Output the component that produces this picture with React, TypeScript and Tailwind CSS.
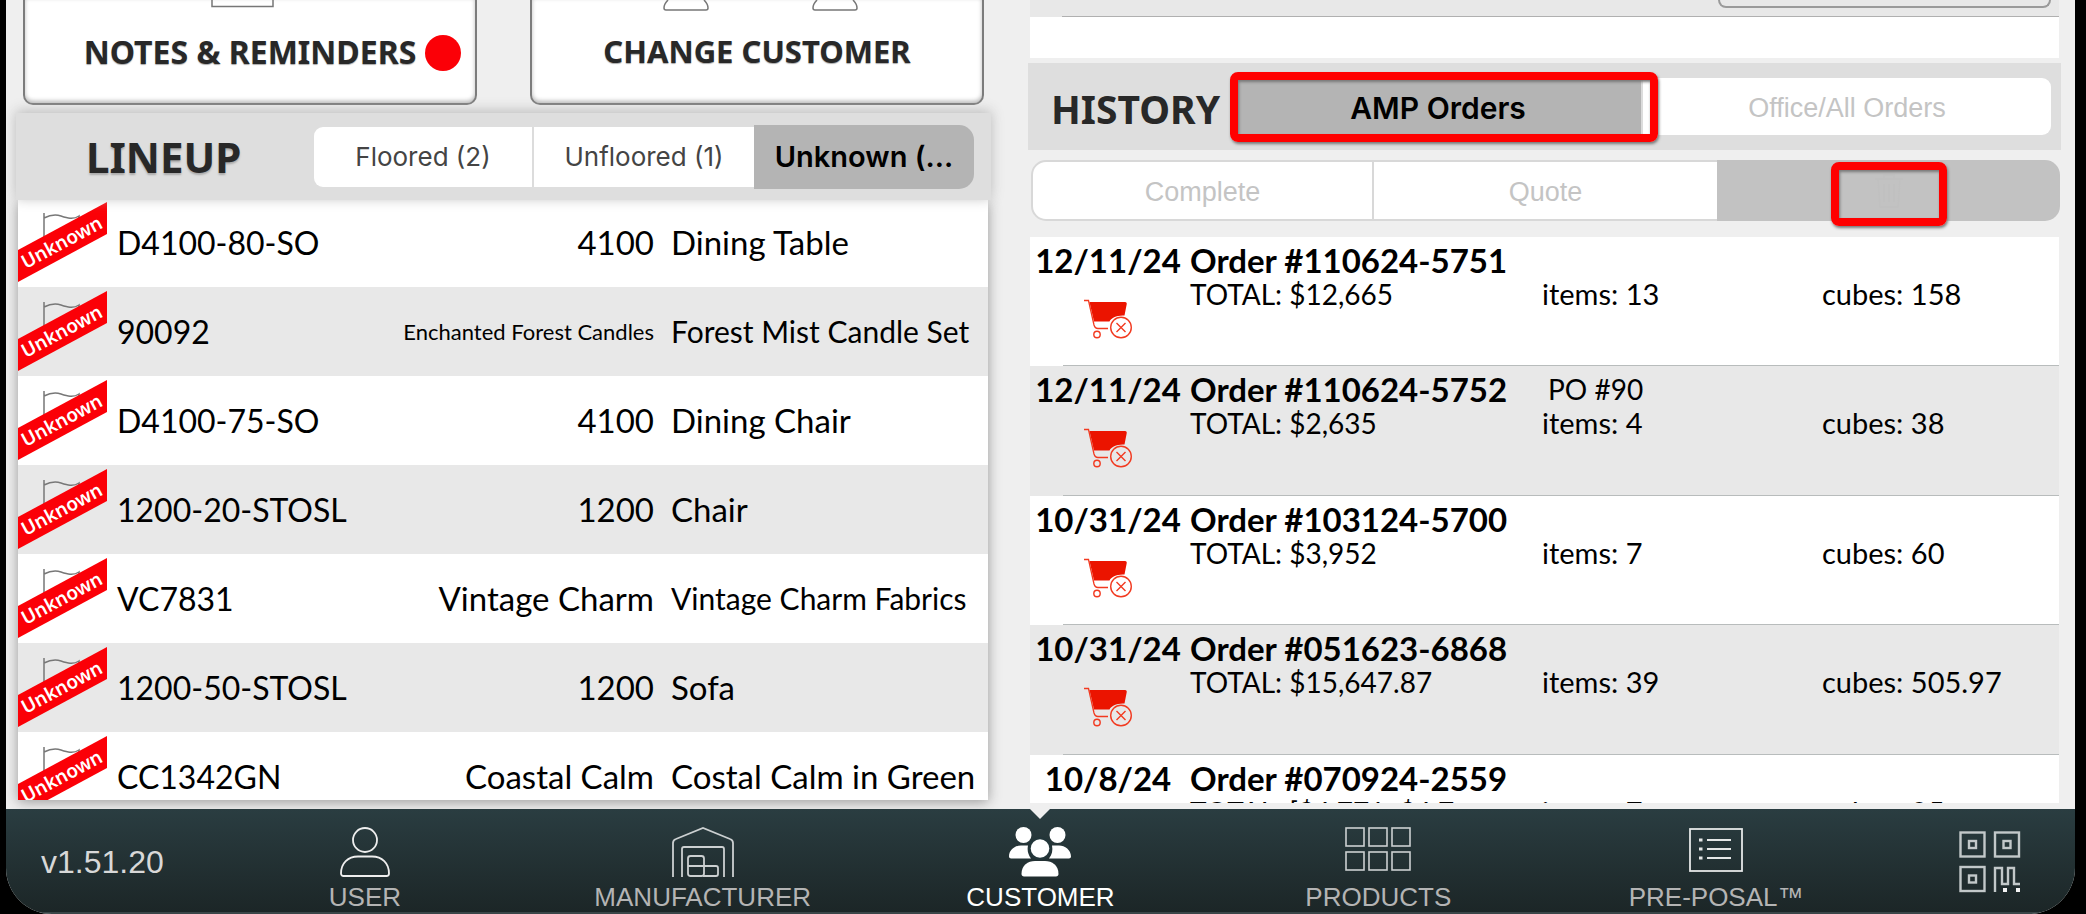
import type { ReactNode } from 'react'
import clsx from 'clsx'

type LineupItem = {
  code: string
  group: string
  name: string
  groupClass?: string
  nameClass?: string
}

type Order = {
  date: string
  number: string
  total: string
  po?: string
  items: string
  cubes: string
}

const LINEUP: LineupItem[] = [
  { code: 'D4100-80-SO', group: '4100', name: 'Dining Table' },
  {
    code: '90092',
    group: 'Enchanted Forest Candles',
    name: 'Forest Mist Candle Set',
    groupClass: 'text-[22px]',
    nameClass: 'text-[30px]',
  },
  { code: 'D4100-75-SO', group: '4100', name: 'Dining Chair' },
  { code: '1200-20-STOSL', group: '1200', name: 'Chair' },
  {
    code: 'VC7831',
    group: 'Vintage Charm',
    name: 'Vintage Charm Fabrics',
    nameClass: 'text-[30px]',
  },
  { code: '1200-50-STOSL', group: '1200', name: 'Sofa' },
  { code: 'CC1342GN', group: 'Coastal Calm', name: 'Costal Calm in Green' },
]

const ORDERS: Order[] = [
  { date: '12/11/24', number: '110624-5751', total: '$12,665', items: '13', cubes: '158' },
  { date: '12/11/24', number: '110624-5752', total: '$2,635', po: 'PO #90', items: '4', cubes: '38' },
  { date: '10/31/24', number: '103124-5700', total: '$3,952', items: '7', cubes: '60' },
  { date: '10/31/24', number: '051623-6868', total: '$15,647.87', items: '39', cubes: '505.97' },
  { date: '10/8/24', number: '070924-2559', total: '[$4,771, $4.7', items: '7', cubes: '85' },
]

function FlagRibbon() {
  return (
    <svg width="89" height="89" viewBox="0 0 89 89" className="block">
      <path
        d="M26 15V50M26 20c6-3 11-4 17-2 6 2 12 4 18 0v10"
        fill="none"
        stroke="#777"
        strokeWidth="1.5"
      />
      <polygon points="0,52 89,4 89,36 0,84" fill="#fb0007" />
      <text
        x="44"
        y="51"
        textAnchor="middle"
        transform="rotate(-28.3 44 45)"
        fill="#fff"
        className="font-['Noto_Sans',sans-serif] text-[19px] font-semibold"
      >
        Unknown
      </text>
    </svg>
  )
}

function CartIcon() {
  return (
    <svg width="48" height="40" viewBox="0 0 48 40" fill="none" className="mx-auto mt-[22px] block">
      <path d="M0 1.5h4.5L10 26c.6 2.2 1.5 3.5 4 3.5h10" stroke="#f23a20" strokeWidth="1.3" />
      <path d="M5.5 3H41c1.5 0 2 1 1.7 2.3L40.5 16.5C33 16 27 19 25.5 22.500H10z" fill="#eb1400" />
      <circle cx="13" cy="35.5" r="3.2" stroke="#f23a20" strokeWidth="1.4" />
      <circle cx="37" cy="28.5" r="10.3" stroke="#f23a20" strokeWidth="1.4" />
      <path d="M32.5 24l9 9M41.5 24l-9 9" stroke="#f23a20" strokeWidth="1.4" />
    </svg>
  )
}

function TrashIcon() {
  return (
    <svg width="30" height="36" viewBox="0 0 30 36" fill="none" stroke="#c0c0c0" strokeWidth="1.5" className="mx-auto">
      <path d="M1 6h28M10 6V2h10v4M4 6l2 28h18l2-28M10 11v18M15 11v18M20 11v18" />
    </svg>
  )
}

function UserIcon() {
  return (
    <svg width="50" height="50" viewBox="0 0 50 50" fill="none" stroke="#eee" strokeWidth="1.8">
      <circle cx="25" cy="13" r="12" />
      <path d="M1 46.5C1 36 8 29.5 18 29.5h14c10 0 17 6.5 17 17 0 1.5-1 2.5-2.5 2.5h-43C2 49 1 48 1 46.5z" />
    </svg>
  )
}

function WarehouseIcon() {
  return (
    <svg width="62" height="50" viewBox="0 0 62 50" fill="none" stroke="#ccd0d1" strokeWidth="1.8">
      <path d="M1 50V16q0-3 3-4L31 1l27 11q3 1 3 4v34" />
      <path d="M10 50V22q0-2 2-2h38q2 0 2 2v28" />
      <rect x="16" y="29" width="16" height="20" rx="2.5" />
      <path d="M16 39h28q2 0 2 2v6q0 2-2 2H31" />
    </svg>
  )
}

function CustomersIcon() {
  return (
    <svg width="62" height="50" viewBox="0 0 62 50" fill="#fff">
      <circle cx="14.5" cy="8" r="8" />
      <circle cx="48.5" cy="8" r="8" />
      <path d="M0 29.5C0 23 6 18.5 12 18.5h7c-1 5 0 9 3 13H2c-1 0-2-1-2-2z" />
      <path d="M62 29.5C62 23 56 18.5 50 18.5h-7c1 5 0 9-3 13h20c1 0 2-1 2-2z" />
      <circle cx="31" cy="21.5" r="11.5" fill="#23363a" />
      <circle cx="31" cy="21.5" r="9.3" />
      <path d="M12.5 47C12.5 38 19 34 26 34h10c7 0 13.5 4 13.5 13 0 1.500-1 2.500-2.500 2.500H15c-1.500 0-2.500-1-2.500-2.500z" />
    </svg>
  )
}

function ProductsIcon() {
  return (
    <svg width="66" height="50" viewBox="0 0 66 50" fill="none" stroke="#ccd0d1" strokeWidth="1.6">
      {[1, 24, 47].map((x) => (
        <g key={x}>
          <rect x={x} y="1" width="18" height="18" />
          <rect x={x} y="25" width="18" height="18" />
        </g>
      ))}
    </svg>
  )
}

function ProposalIcon() {
  return (
    <svg width="54" height="50" viewBox="0 0 54 50" fill="none" stroke="#e5e7e7" strokeWidth="1.8">
      <rect x="1" y="2" width="52" height="42" />
      <path d="M18 13h24M18 22h24M18 31h24" />
      <path d="M10 13h3.5M10 22h3.5M10 31h3.5" strokeWidth="3" />
    </svg>
  )
}

function QrIcon() {
  return (
    <svg width="62" height="62" viewBox="0 0 62 62" fill="none" stroke="#c2c8c9" strokeWidth="2.4">
      <rect x="1.5" y="1.5" width="24" height="24" />
      <rect x="36" y="1.5" width="24" height="24" />
      <rect x="1.5" y="36" width="24" height="24" />
      <rect x="10" y="10" width="7" height="7" />
      <rect x="44.5" y="10" width="7" height="7" />
      <rect x="10" y="44.5" width="7" height="7" />
      <path d="M36 61V37h7v16h6V37h6v16h6" />
      <path d="M44 59h4M57 59h4" strokeWidth="4" stroke="#f4f4f4" />
    </svg>
  )
}

function NavItem({ label, icon, active }: { label: string; icon: ReactNode; active?: boolean }) {
  return (
    <a
      href="#"
      className={clsx(
        'relative flex flex-col items-center justify-between pt-[18px] pb-[2px]',
        active ? 'text-white' : 'text-[#b4b4b4]',
      )}
    >
      {active && (
        <svg width="20" height="10" viewBox="0 0 20 10" className="absolute top-0">
          <polygon points="0,0 20,0 10,10" fill="#efefef" />
        </svg>
      )}
      {icon}
      <span className="text-[26px] leading-[26px]">{label}</span>
    </a>
  )
}

function Highlight({ className }: { className: string }) {
  return (
    <span
      className={clsx(
        'pointer-events-none absolute rounded-[8px] border-8 border-[#ff0000] shadow-[1px_2px_3px_#777,inset_1px_2px_3px_#777]',
        className,
      )}
    />
  )
}

export default function App() {
  return (
    <div className="h-screen overflow-hidden bg-black pr-[11px] pl-[6px] font-[Lato,sans-serif] text-black">
      <div className="flex h-full flex-col overflow-hidden rounded-b-[46px] bg-[#efefef]">
        <main className="grid min-h-0 flex-1 grid-cols-[975fr_1033fr] gap-[37px] pr-[14px] pl-[10px]">
          <div className="flex min-h-0 flex-col">
            <div className="grid grid-cols-2 gap-[53px] px-[7px] font-['Noto_Sans',sans-serif] font-bold text-[#282828]">
              <button
                type="button"
                className="relative h-[105px] rounded-b-[10px] border-2 border-t-0 border-[#7c7c7c] bg-white text-[32px] shadow-[inset_0_-2px_4px_#bbb]"
              >
                <svg width="64" height="8" viewBox="0 0 64 8" className="absolute top-0 left-1/2 -ml-[39px]">
                  <path d="M1 0v6.5h61V0" fill="none" stroke="#777" strokeWidth="1.5" />
                </svg>
                <span className="[text-shadow:0_1px_1px_#aaa]">NOTES &amp; REMINDERS</span>
                <span className="absolute top-[35px] right-[14px] size-[36px] rounded-full bg-[#fb0007]" />
              </button>
              <button
                type="button"
                className="relative h-[105px] rounded-b-[10px] border-2 border-t-0 border-[#7c7c7c] bg-white text-[31px] shadow-[inset_0_-2px_4px_#bbb]"
              >
                <svg width="196" height="12" viewBox="0 0 196 12" className="absolute top-0 left-1/2 -ml-[94px]">
                  <path
                    d="M5 0C2 3 1 6 1 8q0 2 2 2h40q2 0 2-2c0-2-1-5-4-8M154 0c-3 3-4 6-4 8q0 2 2 2h40q2 0 2-2c0-2-1-5-4-8"
                    fill="none"
                    stroke="#777"
                    strokeWidth="1.5"
                  />
                </svg>
                <span className="[text-shadow:0_1px_1px_#aaa]">CHANGE CUSTOMER</span>
              </button>
            </div>

            <section className="mt-[8px] mb-[9px] flex min-h-0 flex-1 flex-col">
              <header className="relative z-10 flex h-[87px] shrink-0 items-center bg-[#dedede] pr-[17px] pl-[70px] shadow-[0_-2px_12px_#bbb]">
                <h2 className="font-['Noto_Sans',sans-serif] text-[42px] font-bold text-[#282828] [text-shadow:0_2px_2px_#aaa]">
                  LINEUP
                </h2>
                <div className="ml-auto grid w-[660px] grid-cols-3 items-center font-[Inter,sans-serif] text-[26px] text-[#444]">
                  <button type="button" className="h-[60px] rounded-l-[9px] border-r-2 border-[#dcdcdc] bg-white">
                    Floored (2)
                  </button>
                  <button type="button" className="h-[60px] bg-white">
                    Unfloored (1)
                  </button>
                  <button type="button" className="h-[64px] rounded-r-[15px] bg-[#b4b4b4] text-[29px] font-semibold text-black">
                    Unknown (...
                  </button>
                </div>
              </header>
              <div className="mr-[3px] ml-[2px] min-h-0 flex-1 shadow-[0_2px_12px_#999]">
                <div className="h-full overflow-hidden">
                  <table className="-mt-[2px] w-full table-fixed text-[33px]">
                    <tbody>
                      {LINEUP.map((item) => (
                        <tr key={item.code} className="h-[89px] bg-white even:bg-[#e8e8e8]">
                          <td className="w-[99px] p-0">
                            <FlagRibbon />
                          </td>
                          <td className="w-[200px] p-0 text-[32px] whitespace-nowrap">{item.code}</td>
                          <td className={clsx('p-0 text-right whitespace-nowrap', item.groupClass)}>{item.group}</td>
                          <td className={clsx('w-[334px] p-0 pl-[17px] whitespace-nowrap', item.nameClass)}>
                            {item.name}
                          </td>
                        </tr>
                      ))}
                    </tbody>
                  </table>
                </div>
              </div>
            </section>
          </div>

          <div className="flex min-h-0 flex-col">
            <div className="mx-[2px] h-[17px] bg-[#e8e8e8]">
              <div className="ml-[32px] flex h-[17px] items-start justify-end border-b border-[#b0b0b0] pr-[8px]">
                <div className="h-[8px] w-[333px] rounded-b-[10px] border-2 border-t-0 border-[#9a9a9a]" />
              </div>
            </div>
            <div className="mx-[2px] h-[41px] bg-white" />

            <header className="mt-[5px] flex h-[87px] shrink-0 items-center bg-[#dedede] pr-[10px] pl-[23px]">
              <h2 className="w-[184px] pt-[6px] font-['Noto_Sans',sans-serif] text-[39px] font-bold text-[#282828]">
                HISTORY
              </h2>
              <div className="grid flex-1 grid-cols-2 items-center">
                <div className="relative">
                  <button
                    type="button"
                    className="block h-[58px] w-full border-r-2 border-[#dcdcdc] bg-[#b4b4b4] pt-[4px] font-[Inter,sans-serif] text-[30px] font-semibold"
                  >
                    AMP Orders
                  </button>
                  <Highlight className="-inset-y-[6px] -right-[15px] -left-[5px]" />
                </div>
                <button
                  type="button"
                  className="h-[57px] rounded-r-[9px] bg-white pt-[4px] font-['Liberation_Sans',Arial,sans-serif] text-[27px] text-[#c4c4c4]"
                >
                  Office/All Orders
                </button>
              </div>
            </header>

            <div className="mt-[10px] mr-px ml-[3px] grid shrink-0 grid-cols-3 font-['Liberation_Sans',Arial,sans-serif] text-[27px] text-[#c4c4c4]">
              <button type="button" className="h-[61px] rounded-l-[15px] border-2 border-[#d8d8d8] bg-white pt-[4px]">
                Complete
              </button>
              <button type="button" className="h-[61px] border-y-2 border-[#d8d8d8] bg-white pt-[4px]">
                Quote
              </button>
              <div className="relative">
                <button type="button" aria-label="Deleted" className="block h-[61px] w-full rounded-r-[15px] bg-[#c2c2c2]">
                  <TrashIcon />
                </button>
                <Highlight className="top-[2px] left-1/2 h-[64px] w-[116px] -translate-x-1/2" />
              </div>
            </div>

            <ul className="mx-[2px] mt-[16px] mb-[6px] min-h-0 flex-1 overflow-hidden">
              {ORDERS.map((order) => (
                <li
                  key={order.number}
                  className="relative grid h-[129px] grid-cols-[160px_352px_280px_1fr] grid-rows-[34px_34px] bg-white pt-[6px] text-[28px] leading-[34px] after:absolute after:right-0 after:bottom-0 after:left-[33px] after:h-px after:bg-[#b8bcbc] even:h-[130px] even:bg-[#e8e8e8]"
                >
                  <div className="row-span-2 pr-[4px] text-center">
                    <div className="text-[33px] font-bold">{order.date}</div>
                    <CartIcon />
                  </div>
                  <div className="text-[33px] font-bold">Order #{order.number}</div>
                  <div className="col-span-2 pl-[6px]">{order.po}</div>
                  <div className="whitespace-nowrap">TOTAL: {order.total}</div>
                  <div className="text-[29px]">items: {order.items}</div>
                  <div className="text-[29px]">cubes: {order.cubes}</div>
                </li>
              ))}
            </ul>
          </div>
        </main>

        <footer className="flex h-[105px] shrink-0 border-b-2 border-[#3a4648] bg-linear-to-b from-[#2a3d41] to-[#1c2627] font-['Liberation_Sans',Arial,sans-serif]">
          <div className="flex w-[190px] items-center pt-[3px] pl-[35px] text-[32px] text-[#d8d8d8]">v1.51.20</div>
          <nav className="grid flex-1 grid-cols-5">
            <NavItem label="USER" icon={<UserIcon />} />
            <NavItem label="MANUFACTURER" icon={<WarehouseIcon />} />
            <NavItem label="CUSTOMER" icon={<CustomersIcon />} active />
            <NavItem label="PRODUCTS" icon={<ProductsIcon />} />
            <NavItem label="PRE-POSAL™" icon={<ProposalIcon />} />
          </nav>
          <button type="button" aria-label="Scan code" className="flex w-[190px] items-center justify-center pt-[2px] pl-[20px]">
            <QrIcon />
          </button>
        </footer>
      </div>
    </div>
  )
}
